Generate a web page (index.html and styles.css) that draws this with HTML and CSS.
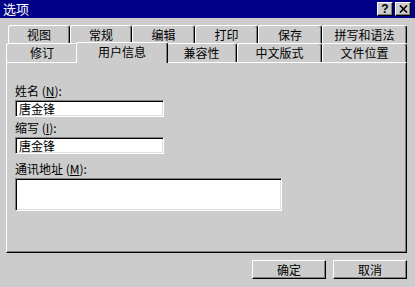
FILE: index.html
```html
<!DOCTYPE html>
<html>
<head>
<meta charset="utf-8">
<link rel="stylesheet" href="styles.css">
</head>
<body>
<div class="dlg">
  <div class="title">
    <span class="title-text">选项</span>
    <div class="caps">
      <div class="cap cap-help">?</div>
      <div class="cap"><svg width="9" height="8" viewBox="0 0 9 8"><path d="M1 0.5 L8 7.5 M8 0.5 L1 7.5" stroke="#000" stroke-width="1.6"/></svg></div>
    </div>
  </div>
  <div class="tabs">
    <div class="row row1">
      <div class="tab w62">视图</div>
      <div class="tab w62">常规</div>
      <div class="tab w63">编辑</div>
      <div class="tab w63">打印</div>
      <div class="tab w64">保存</div>
      <div class="tab w85">拼写和语法</div>
    </div>
    <div class="row row2">
      <div class="tab w72">修订</div>
      <div class="tab sel">用户信息</div>
      <div class="tab w71">兼容性</div>
      <div class="tab w85">中文版式</div>
      <div class="tab w85">文件位置</div>
    </div>
  </div>
  <div class="panel">
    <div class="lbl">姓名 (<u>N</u>):</div>
    <div class="field f1">唐金锋</div>
    <div class="lbl gap4">缩写 (<u>I</u>):</div>
    <div class="field f1">唐金锋</div>
    <div class="lbl gap8">通讯地址 (<u>M</u>):</div>
    <div class="field f3"></div>
  </div>
  <div class="actions">
    <div class="btn">确定</div>
    <div class="btn">取消</div>
  </div>
</div>
</body>
</html>
```
FILE: styles.css
```css
* { box-sizing: border-box; }
html, body { margin: 0; padding: 0; }
body {
  width: 415px;
  height: 287px;
  overflow: hidden;
  background: #cccccc;
  font-family: "Noto Sans CJK SC", "Noto Sans", sans-serif;
  font-size: 12px;
  color: #000;
}
.dlg { width: 415px; height: 287px; background: #cccccc; }
.title {
  height: 18px;
  background: #000088;
  display: flex;
  align-items: center;
  padding-left: 3px;
}
.title-text { color: #fff; font-size: 13px; line-height: 18px; }
.caps { margin-left: auto; display: flex; gap: 2px; padding-right: 4px; }
.cap {
  width: 16px;
  height: 14px;
  background: #cccccc;
  border-top: 1px solid #fff;
  border-left: 1px solid #fff;
  border-right: 1px solid #000;
  border-bottom: 1px solid #000;
  box-shadow: inset -1px -1px #808080;
  display: flex;
  align-items: center;
  justify-content: center;
}
.cap-help {
  font-family: "Liberation Sans", sans-serif;
  font-weight: bold;
  font-size: 12px;
  line-height: 12px;
}
.tabs { padding-top: 7px; }
.row { display: flex; }
.row1 { margin-left: 8px; height: 18px; }
.row2 { margin-left: 6px; height: 19px; }
.tab {
  height: 100%;
  border-top: 1px solid #fff;
  border-left: 1px solid #fff;
  border-right: 1px solid #000;
  box-shadow: inset -1px 0 #808080;
  border-radius: 3px 3px 0 0;
  display: flex;
  align-items: center;
  justify-content: center;
  line-height: 14px;
  background: #cccccc;
}
.w62 { width: 62px; }
.w63 { width: 63px; }
.w64 { width: 64px; }
.w71 { width: 71px; }
.w72 { width: 72px; }
.w85 { width: 85px; }
.sel {
  width: 92px;
  height: 21px;
  margin: -1px -2px 0 -2px;
  position: relative;
  z-index: 1;
  padding-bottom: 2px;
}
.panel {
  margin-left: 6px;
  width: 401px;
  height: 191px;
  border-top: 1px solid #fff;
  border-left: 1px solid #fff;
  border-right: 1px solid #000;
  border-bottom: 1px solid #000;
  box-shadow: inset -1px -1px #808080;
  padding: 21px 0 0 8px;
}
.lbl { height: 14px; line-height: 14px; }
.lbl u { text-decoration: underline; }
.gap4 { margin-top: 4px; }
.gap8 { margin-top: 8px; }
.field {
  margin-top: 2px;
  background: #fff;
  border-top: 1px solid #808080;
  border-left: 1px solid #808080;
  border-right: 1px solid #fff;
  border-bottom: 1px solid #fff;
  box-shadow: inset 1px 1px #000, inset -1px -1px #dfdfdf;
  padding-left: 3px;
  line-height: 15px;
}
.f1 { width: 149px; height: 17px; }
.f3 { width: 267px; height: 33px; }
.actions {
  display: flex;
  justify-content: flex-end;
  gap: 7px;
  padding-right: 8px;
  margin-top: 7px;
}
.btn {
  width: 74px;
  height: 19px;
  border-top: 1px solid #fff;
  border-left: 1px solid #fff;
  border-right: 1px solid #000;
  border-bottom: 1px solid #000;
  box-shadow: inset -1px -1px #808080;
  display: flex;
  align-items: center;
  justify-content: center;
  line-height: 14px;
}
```
